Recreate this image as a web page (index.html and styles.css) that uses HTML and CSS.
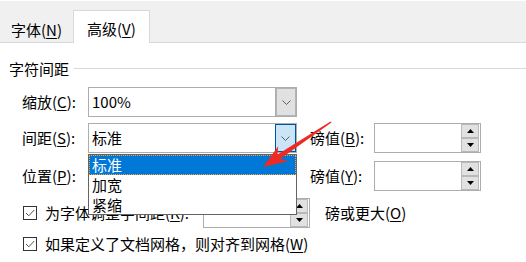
FILE: index.html
```html
<!DOCTYPE html>
<html lang="zh-CN">
<head>
<meta charset="utf-8">
<title>字体 - 高级</title>
<link rel="stylesheet" href="styles.css">
</head>
<body>
<div class="page">
  <div class="tabs">
    <div class="tab">字体(<u>N</u>)</div>
    <div class="tab active">高级(<u>V</u>)</div>
  </div>

  <div class="group-title"><span>字符间距</span><span class="rule"></span></div>

  <div class="row r1">
    <span class="label">缩放(<u>C</u>):</span>
    <div class="combo">
      <span class="value">100%</span>
      <span class="drop-btn"><svg width="9" height="5" viewBox="0 0 9 5"><polyline points="0.5,0.5 4.5,4.5 8.5,0.5" fill="none" stroke="#606060" stroke-width="1"/></svg></span>
    </div>
  </div>

  <div class="row r2">
    <span class="label">间距(<u>S</u>):</span>
    <div class="combo open">
      <span class="value">标准</span>
      <span class="drop-btn"><svg width="9" height="5" viewBox="0 0 9 5"><polyline points="0.5,0.5 4.5,4.5 8.5,0.5" fill="none" stroke="#606060" stroke-width="1"/></svg></span>
      <ul class="list">
        <li class="sel">标准</li>
        <li>加宽</li>
        <li>紧缩</li>
      </ul>
    </div>
    <span class="label2">磅值(<u>B</u>):</span>
    <div class="spin">
      <span class="spin-btn"><svg width="7" height="4" viewBox="0 0 7 4"><polygon points="0,4 7,4 3.5,0" fill="#000"/></svg></span>
      <span class="spin-btn"><svg width="7" height="4" viewBox="0 0 7 4"><polygon points="0,0 7,0 3.5,4" fill="#000"/></svg></span>
    </div>
  </div>

  <div class="row r3">
    <span class="label">位置(<u>P</u>):</span>
    <div class="combo">
      <span class="value"></span>
      <span class="drop-btn"><svg width="9" height="5" viewBox="0 0 9 5"><polyline points="0.5,0.5 4.5,4.5 8.5,0.5" fill="none" stroke="#606060" stroke-width="1"/></svg></span>
    </div>
    <span class="label2">磅值(<u>Y</u>):</span>
    <div class="spin">
      <span class="spin-btn"><svg width="7" height="4" viewBox="0 0 7 4"><polygon points="0,4 7,4 3.5,0" fill="#000"/></svg></span>
      <span class="spin-btn"><svg width="7" height="4" viewBox="0 0 7 4"><polygon points="0,0 7,0 3.5,4" fill="#000"/></svg></span>
    </div>
  </div>

  <div class="row r4">
    <span class="check"><svg width="12" height="12" viewBox="0 0 12 12"><polyline points="2,6 4.8,8.8 10.2,3" fill="none" stroke="#555" stroke-width="1"/></svg></span>
    <span class="check-label">为字体调整字间距(<u>K</u>):</span>
    <div class="spin small">
      <span class="spin-btn"><svg width="7" height="4" viewBox="0 0 7 4"><polygon points="0,4 7,4 3.5,0" fill="#000"/></svg></span>
      <span class="spin-btn"><svg width="7" height="4" viewBox="0 0 7 4"><polygon points="0,0 7,0 3.5,4" fill="#000"/></svg></span>
    </div>
    <span class="after">磅或更大(<u>O</u>)</span>
  </div>

  <div class="row r5">
    <span class="check"><svg width="12" height="12" viewBox="0 0 12 12"><polyline points="2,6 4.8,8.8 10.2,3" fill="none" stroke="#555" stroke-width="1"/></svg></span>
    <span class="check-text">如果定义了文档网格，则对齐到网格(<u>W</u>)</span>
  </div>

  <svg class="arrow" width="526" height="262" viewBox="0 0 526 262">
    <polygon points="263,167 288,161.3 280.3,158.7 331.5,122.6 330.5,121.4 277.5,154.5 278.2,146.3" fill="#ee2a24"/>
  </svg>
</div>
</body>
</html>
```

FILE: styles.css
```css
html, body {
  margin: 0;
  padding: 0;
  background: #ffffff;
}

body {
  font-family: "Noto Sans CJK SC", "Noto Sans", sans-serif;
  font-size: 15px;
  line-height: 20px;
  color: #000;
}

.page {
  position: relative;
  width: 526px;
  height: 262px;
  overflow: hidden;
}

u {
  text-decoration: underline;
  text-underline-offset: 2px;
}

/* tabs */
.tabs {
  display: flex;
  align-items: flex-end;
  height: 43px;
  box-sizing: border-box;
  background: #f0f0f0;
  border-top: 1px solid #ffffff;
  border-bottom: 1px solid #d9d9d9;
}

.tab {
  height: 32px;
  box-sizing: border-box;
  padding: 10px 11px 0 11px;
}

.tab.active {
  height: 33px;
  margin-bottom: -1px;
  padding: 8px 13px 0 13px;
  background: #ffffff;
  border: 1px solid #d9d9d9;
  border-bottom: none;
}

/* group title */
.group-title {
  display: flex;
  align-items: center;
  height: 20px;
  margin-top: 16px;
  padding-left: 9px;
}

.group-title .rule {
  flex: 1;
  height: 1px;
  margin-left: 5px;
  margin-top: -2px;
  background: #d9d9d9;
}

/* rows */
.row {
  display: flex;
  align-items: center;
  height: 30px;
  padding-left: 22px;
}

.r1 { margin-top: 8px; }
.r2 { margin-top: 6px; }
.r3 { margin-top: 8px; }
.r4 { margin-top: 7px; }
.r5 { margin-top: 6px; height: 20px; }

.label {
  width: 66px;
}

.label2 {
  width: 64px;
  margin-left: 13px;
}

/* combo boxes */
.combo {
  position: relative;
  display: flex;
  width: 209px;
  height: 30px;
  box-sizing: border-box;
  border: 1px solid #adadad;
  background: #fff;
}

.combo .value {
  flex: 1;
  padding-left: 3px;
  line-height: 27px;
}

.drop-btn {
  display: flex;
  align-items: center;
  justify-content: center;
  width: 21px;
  box-sizing: border-box;
  background: #e1e1e1;
  border-left: 1px solid #adadad;
  box-shadow: inset 0 0 0 1px #b4b4b4;
}

.combo.open .drop-btn {
  background: #cce4f7;
  border: 1px solid #005499;
  box-shadow: none;
}

.list {
  position: absolute;
  z-index: 10;
  left: -1px;
  top: 30px;
  width: 209px;
  margin: 0;
  padding: 0;
  list-style: none;
  box-sizing: border-box;
  border: 1px solid #646464;
  background: #fff;
}

.list li {
  height: 20px;
  line-height: 19px;
  padding-left: 3px;
}

.list li:last-child {
  height: 19px;
}

.list li.sel {
  background: #0078d7;
  color: #fff;
  outline: 1px dotted #f7a33c;
  outline-offset: -1px;
}

/* spinners */
.spin {
  display: flex;
  flex-direction: column;
  align-items: flex-end;
  width: 107px;
  height: 30px;
  box-sizing: border-box;
  border: 1px solid #adadad;
  padding-right: 1px;
  background: #fff;
}

.spin-btn {
  display: flex;
  align-items: center;
  justify-content: center;
  width: 18px;
  height: 14px;
  box-sizing: border-box;
  background: #e1e1e1;
  border: 1px solid #b9b9b9;
}

.spin.small {
  width: 107px;
}

/* checkboxes */
.check {
  display: flex;
  align-items: center;
  justify-content: center;
  width: 14px;
  height: 14px;
  box-sizing: border-box;
  border: 1px solid #333;
  background: #fff;
  margin-left: 1px;
  margin-right: 8px;
}

.check-label {
  width: 158px;
}

.after {
  margin-left: 15px;
}

/* annotation arrow */
.arrow {
  position: absolute;
  left: 0;
  top: 0;
  z-index: 20;
  pointer-events: none;
}
```
